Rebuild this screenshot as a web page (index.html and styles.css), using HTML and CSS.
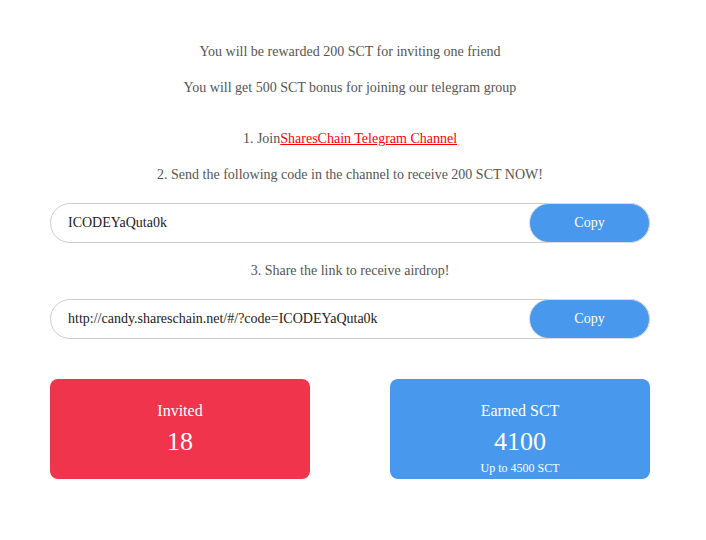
FILE: index.html
```html
<!DOCTYPE html>
<html>
<head>
<meta charset="utf-8">
<link rel="stylesheet" href="styles.css">
</head>
<body>
<div class="page">
  <p class="line first">You will be rewarded 200 SCT for inviting one friend</p>
  <p class="line">You will get 500 SCT bonus for joining our telegram group</p>
  <p class="line step1">1. Join<a class="tg" href="#">SharesChain Telegram Channel</a></p>
  <p class="line">2. Send the following code in the channel to receive 200 SCT NOW!</p>
  <div class="field">
    <span class="value">ICODEYaQuta0k</span>
    <button class="copy">Copy</button>
  </div>
  <p class="line">3. Share the link to receive airdrop!</p>
  <div class="field">
    <span class="value">http://candy.shareschain.net/#/?code=ICODEYaQuta0k</span>
    <button class="copy">Copy</button>
  </div>
  <div class="cards">
    <div class="card red">
      <div class="card-title">Invited</div>
      <div class="card-num">18</div>
    </div>
    <div class="card blue">
      <div class="card-title">Earned SCT</div>
      <div class="card-num">4100</div>
      <div class="card-sub">Up to 4500 SCT</div>
    </div>
  </div>
</div>
</body>
</html>
```
FILE: styles.css
```css
html, body {
  margin: 0;
  padding: 0;
  background: #fff;
}
body {
  font-family: "Liberation Serif", "Times New Roman", serif;
  font-size: 14px;
  color: #555;
}
.page {
  width: 600px;
  padding: 42px 50px 0;
}
.line {
  margin: 0 0 16px;
  line-height: 20px;
  text-align: center;
}
.line.step1 {
  margin-top: 31px;
}
.tg {
  color: #f00;
  text-decoration: underline;
}
.field {
  display: flex;
  align-items: center;
  height: 38px;
  border: 1px solid #ccc;
  border-radius: 20px;
  margin: 18px 0 18px;
  box-sizing: content-box;
}
.value {
  flex: 1;
  padding-left: 17px;
  color: #222;
  font-size: 14px;
}
.copy {
  width: 121px;
  height: 40px;
  margin: -1px -1px -1px 0;
  border: 1px solid #dcdcdc;
  border-radius: 20px;
  background: #4898ee;
  color: #fff;
  font-family: "Liberation Serif", "Times New Roman", serif;
  font-size: 14px;
  padding: 0;
}
.cards {
  display: flex;
  justify-content: space-between;
  margin-top: 40px;
}
.card {
  width: 260px;
  height: 100px;
  border-radius: 8px;
  color: #fff;
  text-align: center;
  box-sizing: border-box;
  padding-top: 21px;
}
.red { background: #f0344b; }
.blue { background: #4898ee; }
.card-title {
  font-size: 16px;
  line-height: 22px;
  margin-bottom: 4px;
}
.card-num {
  font-size: 26px;
  line-height: 32px;
}
.card-sub {
  font-size: 12px;
  line-height: 16px;
  margin-top: 2px;
}
```
